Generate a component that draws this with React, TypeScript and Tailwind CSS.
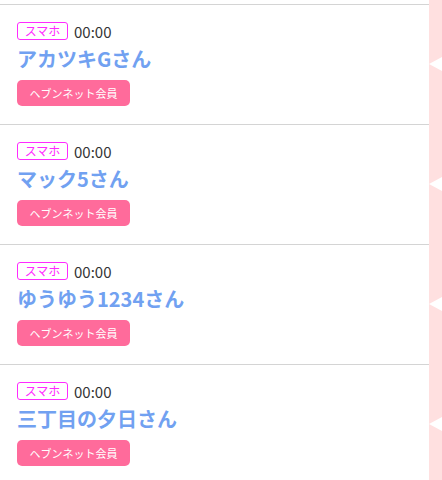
const rows = [
  { name: "アカツキGさん" },
  { name: "マック5さん" },
  { name: "ゆうゆう1234さん" },
  { name: "三丁目の夕日さん" },
];

const Row = ({ name }: { name: string }) => {
  return (
    <div className="flex">
      <div className="flex-1 border-t border-[#d4d4d4] pl-[17px] pt-[17px] pb-[18px]">
        <div className="flex items-center gap-[6px]">
          <span className="flex h-[18px] w-[51px] items-center justify-center rounded-[3px] border border-[#ff2bff] text-[12px] leading-none text-[#ff2bff]">
            スマホ
          </span>
          <span className="text-[15px] leading-none text-[#333]">00:00</span>
        </div>
        <p className="mt-[4px] text-[20px] font-semibold leading-[30px] text-[#71a1f1]">
          {name}
        </p>
        <button className="mt-[6px] flex h-[26px] w-[113px] items-center justify-center rounded-[5px] bg-[#ff6b9b] text-[11px] text-white">
          ヘブンネット会員
        </button>
      </div>
      <div className="flex w-[13px] items-center bg-[#ffe0e0]">
        <div className="h-0 w-0 border-y-[7.5px] border-r-[13px] border-y-transparent border-r-white" />
      </div>
    </div>
  );
};

export default function App() {
  return (
    <div
      className="h-[480px] w-[442px] overflow-hidden bg-white"
      style={{ fontFamily: '"Noto Sans CJK JP", "Noto Sans", sans-serif' }}
    >
      <div className="flex h-[4px]">
        <div className="flex-1" />
        <div className="w-[13px] bg-[#ffe0e0]" />
      </div>
      {rows.map((r) => (
        <Row key={r.name} name={r.name} />
      ))}
    </div>
  );
}
